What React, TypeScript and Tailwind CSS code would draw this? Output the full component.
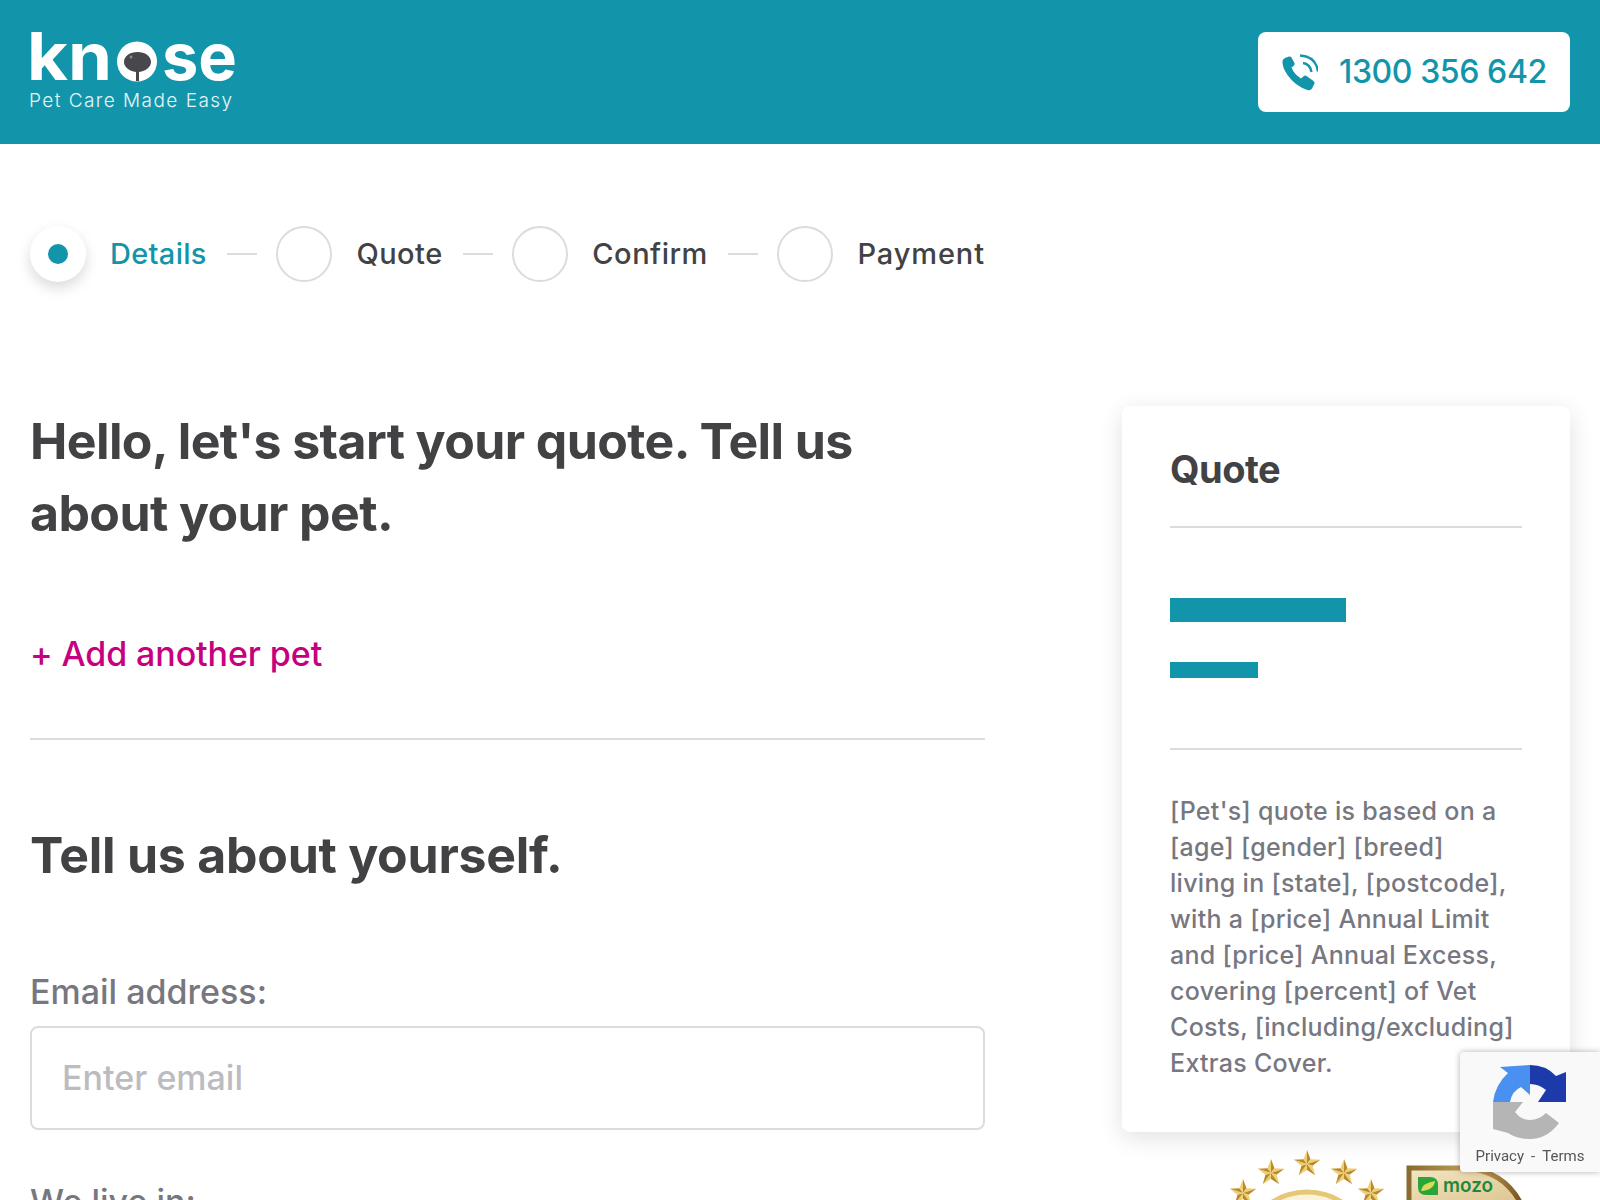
const teal = "text-[#1295aa]"

function Logo() {
  return (
    <div className="flex flex-col">
      <svg viewBox="0 0 208 51" className="h-[51px] w-[208px] overflow-visible" fontFamily="Inter, sans-serif" fontWeight="700" fontSize="66" fill="#fff">
        <text x="-3" y="48" textLength="85" lengthAdjust="spacingAndGlyphs">kn</text>
        <circle cx="107" cy="29.5" r="20" fill="#fff" />
        <path d="M94 30c0-6 6-10 13.500-10S121 24 121 30c0 5-5 9-12 10v9h-3v-9c-7-1-12-5-12-10z" fill="#48484c" />
        <circle cx="101" cy="25" r="1.500" fill="#8a8a90" />
        <text x="132" y="48" textLength="75" lengthAdjust="spacingAndGlyphs">se</text>
      </svg>
      <span className="mt-[6px] -ml-px text-[19px] leading-[24px] tracking-[1.45px] text-white/90 font-light">Pet Care Made Easy</span>
    </div>
  )
}

function PhoneIcon() {
  return (
    <svg viewBox="0 0 36 37" className="h-[37px] w-9 shrink-0">
      <path
        d="M3 4l4-1.500q1.500-.5 2.500 1l3 5.500q.5 1.500-.5 2.500l-2.500 2q2.500 6.500 9.500 11l3-2.500q1-1 2.500 0l7 5q1.500 1 1 2.500l-2.500 5q-1.500 2.500-4.500 1.500-12.500-4-20-15Q0 13 .5 7 1 5 3 4z"
        fill="#1295aa"
      />
      <path d="M21 9q7 1 8.500 9M18 1.500q16 1 18 16" fill="none" stroke="#1295aa" strokeWidth="2.400" />
    </svg>
  )
}

function Step({ label, active, spacing = "tracking-[0.5px]" }: { label: string; active?: boolean; spacing?: string }) {
  return (
    <div className="flex items-center gap-6">
      {active ? (
        <div className="flex h-14 w-14 items-center justify-center rounded-full bg-white shadow-[0_6px_14px_rgba(0,0,0,0.15)]">
          <div className="h-5 w-5 rounded-full bg-[#1295aa]" />
        </div>
      ) : (
        <div className="h-14 w-14 rounded-full border-2 border-[#dcdcdc]" />
      )}
      <span className={`text-[29px] font-medium ${spacing} ${active ? teal : "text-[#424245]"}`}>{label}</span>
    </div>
  )
}

function Star({ x, y, r }: { x: number; y: number; r: number }) {
  const pts = [0, 1, 2, 3, 4, 5, 6, 7, 8, 9].map((i) => {
    const a = (Math.PI / 5) * i - Math.PI / 2
    const d = i % 2 ? r * 0.42 : r
    return [x + d * Math.cos(a), y + d * Math.sin(a)]
  })
  return (
    <g>
      {pts.map((p, i) => {
        const q = pts[(i + 1) % 10]
        return <polygon key={i} points={`${x},${y} ${p[0]},${p[1]} ${q[0]},${q[1]}`} fill={i % 2 ? "#f0cf70" : "#b98a2c"} />
      })}
    </g>
  )
}

// viewBox uses page coordinates so the badges sit where they do in the page
function Badges() {
  return (
    <svg viewBox="1230 1148 300 52" className="mt-4 ml-[108px] h-[52px] w-[300px]">
      <defs>
        <linearGradient id="mozoFill" x1="0" y1="0" x2="1" y2="1">
          <stop offset="0" stopColor="#f3e6c4" />
          <stop offset="1" stopColor="#dcc58f" />
        </linearGradient>
        <linearGradient id="mozoEdge" x1="0" y1="0" x2="1" y2="0">
          <stop offset="0" stopColor="#8a6a30" />
          <stop offset="0.6" stopColor="#c9a55c" />
          <stop offset="1" stopColor="#7a5420" />
        </linearGradient>
      </defs>
      <circle cx="1307" cy="1256" r="64" fill="#fbf3d9" stroke="#e6c778" strokeWidth="5" />
      <Star x={1307} y={1164} r={14} />
      <Star x={1271} y={1173} r={14} />
      <Star x={1344} y={1173} r={14} />
      <Star x={1243} y={1193} r={14} />
      <Star x={1371} y={1193} r={14} />
      <path d="M1409 1204V1168h58q38 4 54 36" fill="url(#mozoFill)" stroke="url(#mozoEdge)" strokeWidth="5" />
      <path d="M1418 1177h12q8 0 8 8v10h-12q-8 0-8-8z" fill="#2aa53a" />
      <path d="M1421 1191q1-8 14-10-1 9-14 10z" fill="#dcd95a" />
      <text x="1443" y="1192" fontFamily="Inter, sans-serif" fontSize="20" fontWeight="600" fill="#23883c" textLength="50" lengthAdjust="spacingAndGlyphs">mozo</text>
    </svg>
  )
}

function Recaptcha() {
  return (
    <div className="fixed right-0 top-[1052px] flex h-[120px] w-[140px] flex-col items-center rounded-l-[4px] bg-[#f9f9f9] shadow-[0_0_6px_rgba(0,0,0,0.3)]">
      <svg viewBox="0 0 74 74" className="mt-[13px] h-[74px] w-[74px]">
        <path d="M0 37Q2 20 15 8L7 2 37 0V30L28 22Q19 26 17 37z" fill="#4a90f0" />
        <path d="M37 0Q53 0 63 11L73 7V37H45L53 25Q46 19 37 19z" fill="#1c3aa9" />
        <path d="M0 37H30L22 47Q28 55 37 55 46 55 53 48L66 58Q54 74 37 74 24 74 15 68L0 64z" fill="#b5b5b5" />
      </svg>
      <div className="mt-[8px] flex gap-[7px] text-[15px] leading-[18px] text-[#555] font-['Roboto',sans-serif]">
        <span>Privacy</span>
        <span>-</span>
        <span>Terms</span>
      </div>
    </div>
  )
}

export default function App() {
  return (
    <div className="h-[1200px] overflow-hidden bg-white font-['Inter',sans-serif] text-[#424245]">
      <header className="flex h-[144px] items-center justify-between bg-[#1295aa] px-[30px]">
        <Logo />
        <div className="flex h-20 w-[312px] items-center gap-[21px] rounded-lg bg-white pl-6">
          <PhoneIcon />
          <span className={`text-[32px] font-medium tracking-[-0.4px] ${teal}`}>1300 356 642</span>
        </div>
      </header>

      <div className="flex px-[30px]">
        <main className="w-[955px]">
          <nav className="mt-[82px] flex items-center justify-between">
            <Step label="Details" active spacing="tracking-[0.3px]" />
            <div className="h-0.5 w-[30px] bg-[#dcdcdc]" />
            <Step label="Quote" />
            <div className="h-0.5 w-[30px] bg-[#dcdcdc]" />
            <Step label="Confirm" />
            <div className="h-0.5 w-[30px] bg-[#dcdcdc]" />
            <Step label="Payment" spacing="tracking-[0.9px]" />
          </nav>

          <h1 className="mt-[123px] max-w-[860px] text-[50px] leading-[72px] font-bold tracking-[-0.6px]">
            Hello, let's start your quote. Tell us about your pet.
          </h1>

          <div className="mt-[81px] text-[34px] leading-[48px] font-medium tracking-[-0.1px] text-[#c6007e]">+ Add another pet</div>

          <div className="mt-[60px] h-0.5 bg-[#dcdcdc]" />

          <h2 className="mt-[79px] text-[50px] leading-[72px] font-bold tracking-[-0.25px]">Tell us about yourself.</h2>

          <label className="mt-[77px] block text-[34px] leading-[48px] font-medium text-[#77777f]">Email address:</label>
          <input
            placeholder="Enter email"
            className="mt-[10px] h-[104px] w-full rounded-lg border-2 border-[#dcdcdc] px-[30px] pb-0.5 text-[34px] font-medium placeholder:text-[#bcbcc0]"
          />
          <label className="mt-[48px] block text-[34px] leading-[48px] font-medium text-[#77777f]">We live in:</label>
        </main>

        <aside className="ml-[137px] w-[448px] pt-[262px]">
          <div className="h-[726px] rounded-lg bg-white px-12 pt-[36px] shadow-[0_6px_24px_rgba(0,0,0,0.12)]">
            <h3 className="text-[38px] leading-[54px] font-bold tracking-[-0.5px]">Quote</h3>
            <div className="mt-[30px] h-0.5 bg-[#dcdcdc]" />
            <div className="mt-[70px] h-6 w-[176px] bg-[#1295aa]" />
            <div className="mt-10 h-4 w-[88px] bg-[#1295aa]" />
            <div className="mt-[70px] h-0.5 bg-[#dcdcdc]" />
            <p className="mt-[43px] text-[25px] leading-[36px] font-medium tracking-[0.3px] text-[#77777f]">
              [Pet's] quote is based on a<br />
              [age] [gender] [breed]<br />
              living in [state], [postcode],<br />
              with a [price] Annual Limit<br />
              and [price] Annual Excess,<br />
              covering [percent] of Vet<br />
              Costs, [including/excluding]<br />
              Extras Cover.
            </p>
          </div>
          <Badges />
        </aside>
      </div>
      <Recaptcha />
    </div>
  )
}
